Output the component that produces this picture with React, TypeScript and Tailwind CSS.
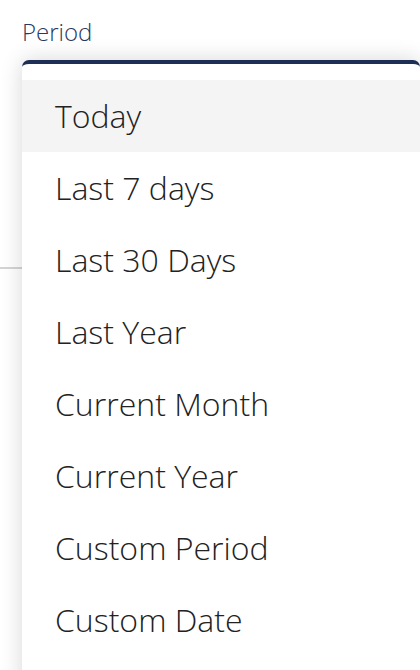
import React from 'react';

const options = [
  'Today',
  'Last 7 days',
  'Last 30 Days',
  'Last Year',
  'Current Month',
  'Current Year',
  'Custom Period',
  'Custom Date',
];

export default function App() {
  return (
    <div
      className="relative h-[670px] w-[420px] overflow-hidden bg-white"
      style={{ fontFamily: '"Open Sans", "Noto Sans", sans-serif' }}
    >
      {/* Form underneath the open menu */}
      <div className="px-[22px] pt-[16px]">
        <label className="block text-[24px] font-light leading-[32px] text-[#263a62]">Period</label>
      </div>
      <div className="mt-[219px] h-[2px] bg-[#d4d4d4]" />

      {/* Dropdown menu */}
      <div className="absolute left-[22px] right-0 top-[60px] h-[640px] rounded-t-[7px] border-t-4 border-[#1e2f55] bg-white pt-4 shadow-[0_0_22px_rgba(0,0,0,0.16)]">
        <ul>
          {options.map((opt, i) => (
            <li
              key={opt}
              className={
                'h-[72px] px-[33px] text-[32px] font-light leading-[72px] text-[#222222] ' +
                (i === 0 ? 'bg-[#f4f4f4]' : '')
              }
            >
              {opt}
            </li>
          ))}
        </ul>
      </div>
    </div>
  );
}
